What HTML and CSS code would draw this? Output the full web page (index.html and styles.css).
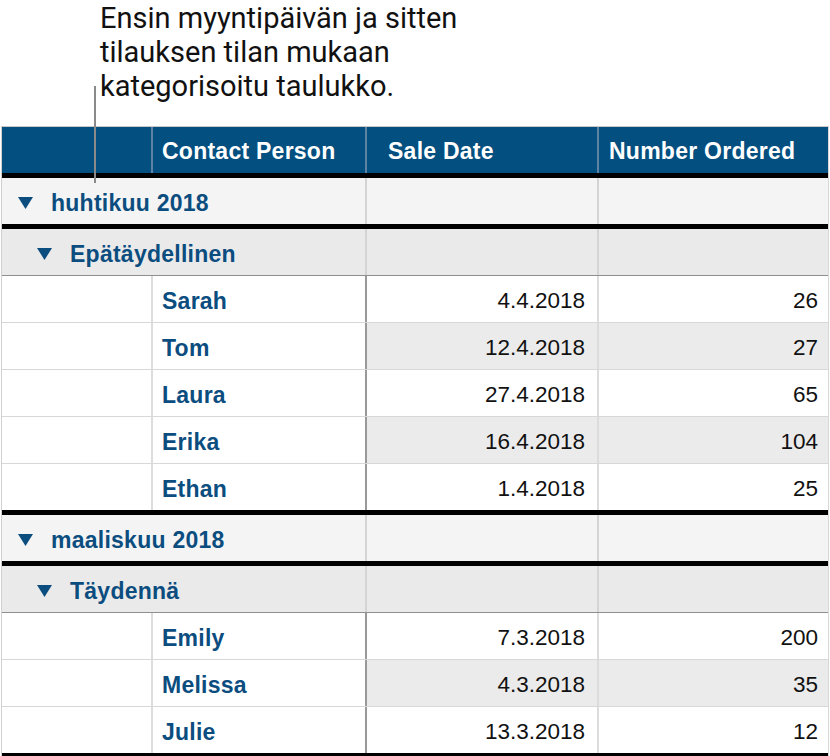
FILE: index.html
```html
<!DOCTYPE html>
<html>
<head>
<meta charset="utf-8">
<link rel="stylesheet" href="styles.css">
</head>
<body>
<div class="page">
  <div class="callout">
    <p class="callout-text">Ensin myyntipäivän ja sitten<br>tilauksen tilan mukaan<br>kategorisoitu taulukko.</p>
    <div class="callout-line"></div>
  </div>
  <div class="table">
    <div class="row header">
      <div class="cell c1"></div>
      <div class="cell c2">Contact Person</div>
      <div class="cell c3 pad-wide">Sale Date</div>
      <div class="cell c4">Number Ordered</div>
    </div>

    <div class="row group">
      <div class="cell span12"><svg class="tri" viewBox="0 0 15 12"><path d="M0 0H15L7.5 12Z"/></svg><span>huhtikuu 2018</span></div>
      <div class="cell c3"></div>
      <div class="cell c4"></div>
    </div>
    <div class="row subgroup">
      <div class="cell span12 indent"><svg class="tri" viewBox="0 0 15 12"><path d="M0 0H15L7.5 12Z"/></svg><span>Epätäydellinen</span></div>
      <div class="cell c3"></div>
      <div class="cell c4"></div>
    </div>
    <div class="row data">
      <div class="cell c1"></div><div class="cell c2 name">Sarah</div><div class="cell c3 num">4.4.2018</div><div class="cell c4 num">26</div>
    </div>
    <div class="row data alt">
      <div class="cell c1"></div><div class="cell c2 name">Tom</div><div class="cell c3 num">12.4.2018</div><div class="cell c4 num">27</div>
    </div>
    <div class="row data">
      <div class="cell c1"></div><div class="cell c2 name">Laura</div><div class="cell c3 num">27.4.2018</div><div class="cell c4 num">65</div>
    </div>
    <div class="row data alt">
      <div class="cell c1"></div><div class="cell c2 name">Erika</div><div class="cell c3 num">16.4.2018</div><div class="cell c4 num">104</div>
    </div>
    <div class="row data last">
      <div class="cell c1"></div><div class="cell c2 name">Ethan</div><div class="cell c3 num">1.4.2018</div><div class="cell c4 num">25</div>
    </div>

    <div class="row group">
      <div class="cell span12"><svg class="tri" viewBox="0 0 15 12"><path d="M0 0H15L7.5 12Z"/></svg><span>maaliskuu 2018</span></div>
      <div class="cell c3"></div>
      <div class="cell c4"></div>
    </div>
    <div class="row subgroup">
      <div class="cell span12 indent"><svg class="tri" viewBox="0 0 15 12"><path d="M0 0H15L7.5 12Z"/></svg><span>Täydennä</span></div>
      <div class="cell c3"></div>
      <div class="cell c4"></div>
    </div>
    <div class="row data">
      <div class="cell c1"></div><div class="cell c2 name">Emily</div><div class="cell c3 num">7.3.2018</div><div class="cell c4 num">200</div>
    </div>
    <div class="row data alt">
      <div class="cell c1"></div><div class="cell c2 name">Melissa</div><div class="cell c3 num">4.3.2018</div><div class="cell c4 num">35</div>
    </div>
    <div class="row data last">
      <div class="cell c1"></div><div class="cell c2 name">Julie</div><div class="cell c3 num">13.3.2018</div><div class="cell c4 num">12</div>
    </div>
  </div>
</div>
</body>
</html>
```

FILE: styles.css
```css
html, body {
  margin: 0;
  padding: 0;
  background: #ffffff;
}
.page {
  position: relative;
  width: 830px;
  height: 756px;
  overflow: hidden;
}
.callout {
  height: 126px;
}
.callout-text {
  margin: 0;
  padding: 1px 0 0 100px;
  font-family: Roboto, "Noto Sans", sans-serif;
  font-size: 29px;
  line-height: 34px;
  color: #111111;
}
.callout-line {
  position: absolute;
  left: 94px;
  top: 86px;
  width: 2px;
  height: 97px;
  background: #8a8a8a;
  z-index: 2;
}
.table {
  margin-left: 1px;
  width: 828px;
  border-top: 1px solid #c8c8c8;
  border-left: 1px solid #d0d0d0;
  border-right: 1px solid #d8d8d8;
  box-sizing: border-box;
  font-family: "Liberation Sans", Arial, sans-serif;
  font-size: 22.5px;
}
.row {
  display: grid;
  grid-template-columns: 151px 214px 232px 1fr;
  height: 46px;
}
.cell {
  display: flex;
  align-items: center;
  box-sizing: border-box;
  padding: 4px 10px 0 10px;
  white-space: nowrap;
}
.c1, .c2, .c3, .span12 {
  border-right: 2px solid #dcdcdc;
}
.span12 {
  grid-column: 1 / 3;
}
.header {
  background: #034f80;
  color: #ffffff;
  font-weight: bold;
  font-size: 23px;
  letter-spacing: 0.25px;
  box-sizing: content-box;
  border-bottom: 5px solid #000000;
}
.header .cell {
  border-right-color: #5d82a3;
  padding-left: 9px;
  padding-top: 2px;
}
.header .pad-wide {
  padding-left: 21px;
}
.header .c4 {
  border-right: none;
  padding-left: 10px;
}
.group {
  background: #f4f4f4;
  box-sizing: content-box;
  border-bottom: 5px solid #000000;
}
.subgroup {
  background: #eaeaea;
  box-sizing: content-box;
  border-bottom: 1px solid #8f8f8f;
}
.group .cell, .subgroup .cell {
  border-right-color: #d4d4d4;
}
.group .span12, .subgroup .span12 {
  color: #0c4d7f;
  font-weight: bold;
  font-size: 23px;
  letter-spacing: 0.25px;
  padding-left: 16px;
}
.subgroup .span12.indent {
  padding-left: 35px;
}
.tri {
  width: 15px;
  height: 12px;
  fill: #0c4d7f;
  margin-right: 18px;
  flex: none;
}
.group .c4, .subgroup .c4, .data .c4 {
  border-right: none;
}
.data {
  box-sizing: content-box;
  border-bottom: 1px solid #d8d8d8;
  background: #ffffff;
}
.data.last {
  border-bottom: 5px solid #000000;
}
.data .c2 {
  border-right-color: #999999;
}
.data.alt .c3, .data.alt .c4 {
  background: #ebebeb;
}
.name {
  color: #0c4d7f;
  font-weight: bold;
  font-size: 23px;
  letter-spacing: 0.25px;
}
.data .c2.name {
  padding-left: 9px;
}
.num {
  justify-content: flex-end;
  color: #111111;
}
.data .c3.num {
  padding-right: 12px;
}
.data .c4.num {
  padding-right: 10px;
}
```
